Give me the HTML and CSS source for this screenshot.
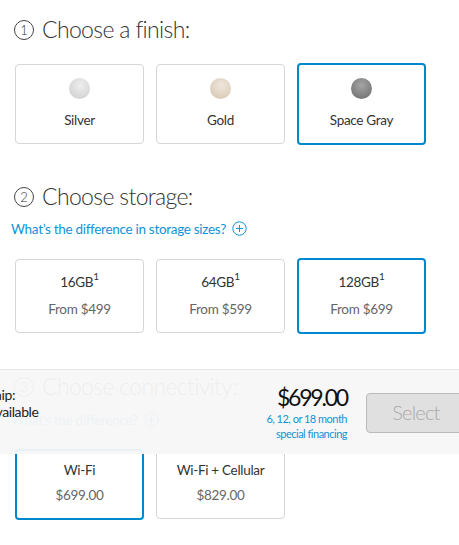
FILE: index.html
```
<!DOCTYPE html>
<html lang="en">
<head>
<meta charset="utf-8">
<title>Choose your iPad</title>
<link rel="stylesheet" href="styles.css">
</head>
<body>
<main class="page">
  <section class="step step-finish">
    <h2 class="step-title"><span class="step-num">1</span>Choose a finish:</h2>
    <div class="options options-finish">
      <div class="card"><span class="swatch swatch-silver"></span><span class="card-name">Silver</span></div>
      <div class="card"><span class="swatch swatch-gold"></span><span class="card-name">Gold</span></div>
      <div class="card card-selected"><span class="swatch swatch-gray"></span><span class="card-name">Space Gray</span></div>
    </div>
  </section>
  <section class="step step-storage">
    <h2 class="step-title"><span class="step-num">2</span>Choose storage:</h2>
    <a class="help">What’s the difference in storage sizes?<svg class="plus" viewBox="0 0 15 15"><circle cx="7.5" cy="7.5" r="6.7"/><path d="M7.5 4v7M4 7.5h7"/></svg></a>
    <div class="options options-storage">
      <div class="card"><span class="card-name">16GB<sup>1</sup></span><span class="card-price">From $499</span></div>
      <div class="card"><span class="card-name">64GB<sup>1</sup></span><span class="card-price">From $599</span></div>
      <div class="card card-selected"><span class="card-name">128GB<sup>1</sup></span><span class="card-price">From $699</span></div>
    </div>
  </section>
  <section class="step step-connect">
    <h2 class="step-title"><span class="step-num">3</span>Choose connectivity:</h2>
    <a class="help">What’s the difference?<svg class="plus" viewBox="0 0 15 15"><circle cx="7.5" cy="7.5" r="6.7"/><path d="M7.5 4v7M4 7.5h7"/></svg></a>
    <div class="options options-connect">
      <div class="card card-selected"><span class="card-name">Wi-Fi</span><span class="card-price">$699.00</span></div>
      <div class="card"><span class="card-name">Wi-Fi + Cellular</span><span class="card-price">$829.00</span></div>
    </div>
  </section>
</main>
<aside class="buybar">
  <div class="ship"><div>Ship:</div><div>Available</div></div>
  <div class="total">
    <div class="total-price">$699.00</div>
    <a class="financing">6, 12, or 18 month<br>special financing</a>
  </div>
  <button class="select" type="button">Select</button>
</aside>
</body>
</html>
```
FILE: styles.css
```
* { box-sizing: border-box; }
html, body { margin: 0; height: 100%; overflow: hidden; background: #fff; }
body { position: relative; font-family: Lato, "Liberation Sans", sans-serif; color: #333; }
.page { padding: 0 33px 0 15px; }
.step-title { margin: 0 0 0 -1px; padding-bottom: 2px; display: flex; align-items: center; height: 30px; font-size: 23px; font-weight: 300; letter-spacing: -.65px; color: #333; }
.step-num { width: 20px; height: 20px; margin: 2px 8px 0 0; border: 1px solid #444; border-radius: 50%; display: flex; align-items: center; justify-content: center; font-size: 13px; font-weight: 300; letter-spacing: 0; }
.step-finish { padding-top: 15px; }
.step-storage { padding-top: 38px; }
.step-connect { padding-top: 39px; }
.step-finish .options { margin-top: 19px; height: 80px; }
.step-storage .options { margin-top: 22px; height: 74px; }
.step-connect .options { margin-top: 22px; height: 69px; }
.options { display: grid; grid-template-columns: repeat(3, 129px); column-gap: 12px; }
.card { display: flex; flex-direction: column; align-items: center; border: 1px solid #d6d6d6; border-radius: 4px; font-size: 13.5px; letter-spacing: -.3px; background: #fff; }
.card-selected { border: 2px solid #0088cc; margin: -1px 0; }
.options-finish .card { padding-top: 13px; }
.options-storage .card, .options-connect .card { justify-content: center; }
.options-storage .card { gap: 10px; }
.options-connect .card { gap: 8px; padding-bottom: 3px; }
.swatch { width: 21px; height: 21px; border-radius: 50%; margin-bottom: 13px; }
.swatch-silver { background: radial-gradient(circle at 55% 35%, #eee, #cfcfcf 90%); }
.swatch-gold { background: radial-gradient(circle at 55% 35%, #efe7dc, #d6c6b2 90%); }
.swatch-gray { background: radial-gradient(circle at 50% 35%, #a5a5a5, #6f6f6f 90%); }
.card-name { line-height: 17px; color: #333; }
.card-name sup { font-size: 10px; line-height: 0; vertical-align: 7px; }
.card-price { line-height: 17px; color: #666; }
.help { display: flex; align-items: center; margin: 8px 0 0 -4px; height: 17px; font-size: 13.5px; letter-spacing: -.3px; color: #0f94d6; }
.step-connect .help { margin-top: 9px; }
.plus { width: 15px; height: 15px; margin-left: 6px; fill: none; stroke: currentColor; stroke-width: 1; }
.buybar { position: absolute; left: 0; right: 0; top: 369px; height: 85px; display: flex; overflow: hidden; background: rgba(247, 247, 247, .95); border-top: 1px solid #e6e6e6; }
.ship { position: absolute; left: -13px; top: 16px; font-size: 14px; line-height: 17px; letter-spacing: -.4px; color: #222; }
.total { margin-left: auto; margin-top: 13px; text-align: right; }
.total-price { font-size: 23px; line-height: 28px; color: #111; letter-spacing: -2.2px; }
.financing { display: block; font-size: 11px; line-height: 15px; letter-spacing: -.5px; color: #0f94d6; }
.select { flex: none; width: 100px; height: 40px; margin: 23px -7px 0 19px; border: 1px solid #bbb; border-radius: 4px; background: #e0e0e0; color: #aaa; font: 300 20px Lato, "Liberation Sans", sans-serif; letter-spacing: -.8px; text-align: center; padding: 0 0 3px 0; }
```
